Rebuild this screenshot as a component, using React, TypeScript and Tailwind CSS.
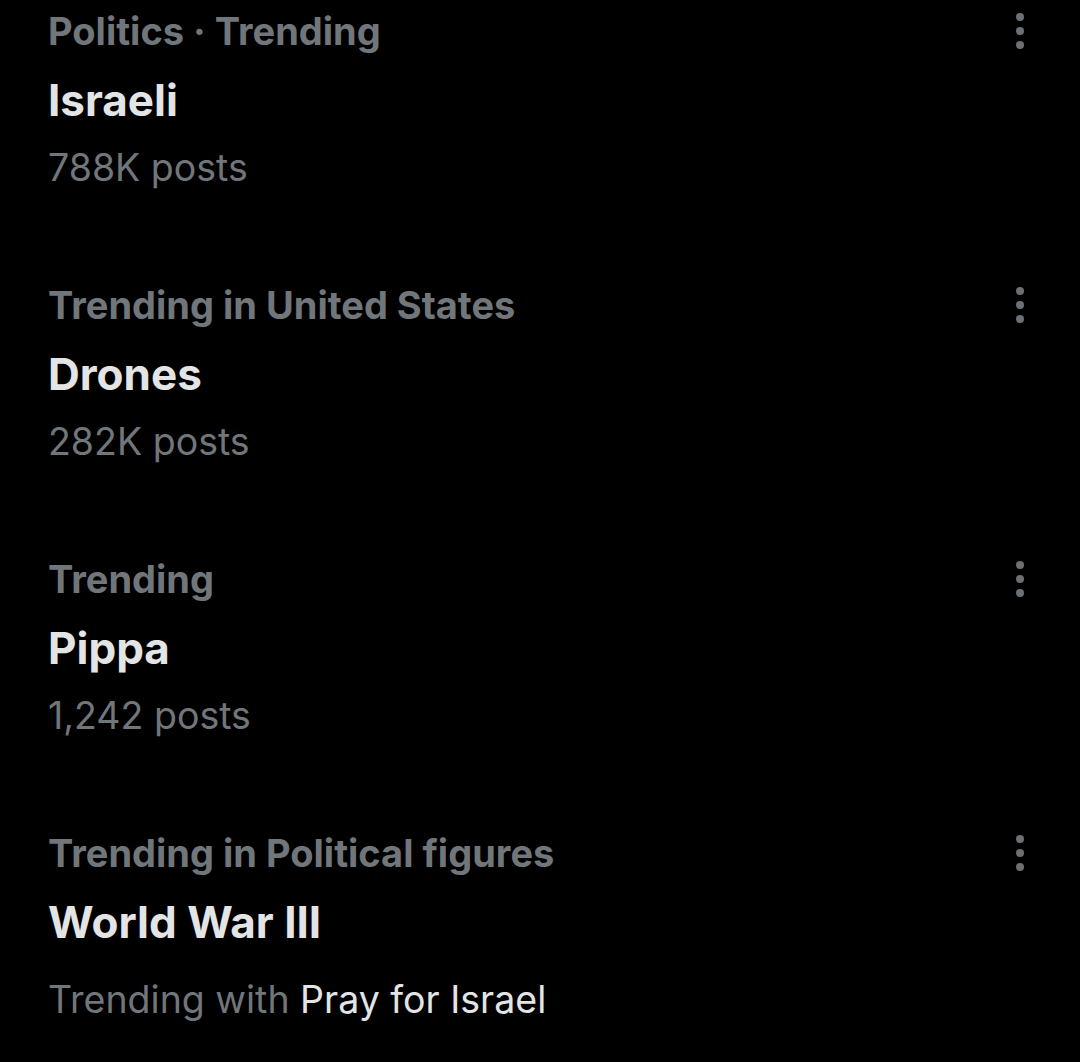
const trends = [
  { category: 'Politics · Trending', title: 'Israeli', meta: '788K posts' },
  { category: 'Trending in United States', title: 'Drones', meta: '282K posts' },
  { category: 'Trending', title: 'Pippa', meta: '1,242 posts' },
];

function MoreDots() {
  return (
    <div className="flex flex-col items-center gap-[6px] pt-[13px] pr-[56px]">
      <span className="block w-[8px] h-[8px] rounded-full bg-[#6b7075]" />
      <span className="block w-[8px] h-[8px] rounded-full bg-[#6b7075]" />
      <span className="block w-[8px] h-[8px] rounded-full bg-[#6b7075]" />
    </div>
  );
}

export default function App() {
  return (
    <div
      className="w-[1080px] h-[1062px] bg-black overflow-hidden pl-[48px]"
      style={{ fontFamily: 'Inter, "Noto Sans", sans-serif' }}
    >
      {trends.map((t) => (
        <div key={t.title} className="flex justify-between h-[274px]">
          <div className="flex flex-col">
            <div className="leading-[62px] text-[38px] font-bold text-[#71767b]">{t.category}</div>
            <div className="leading-[76px] text-[44px] font-bold text-[#e2e4e5]">{t.title}</div>
            <div className="leading-[60px] text-[37.5px] text-[#71767b]">{t.meta}</div>
          </div>
          <MoreDots />
        </div>
      ))}
      <div className="flex justify-between">
        <div className="flex flex-col">
          <div className="leading-[62px] text-[38px] font-bold text-[#71767b]">Trending in Political figures</div>
          <div className="leading-[76px] text-[44px] font-bold text-[#e2e4e5]">World War III</div>
          <div className="leading-[80px] text-[37.5px] text-[#71767b]">
            Trending with <span className="text-[#e2e4e5]">Pray for Israel</span>
          </div>
        </div>
        <MoreDots />
      </div>
    </div>
  );
}
